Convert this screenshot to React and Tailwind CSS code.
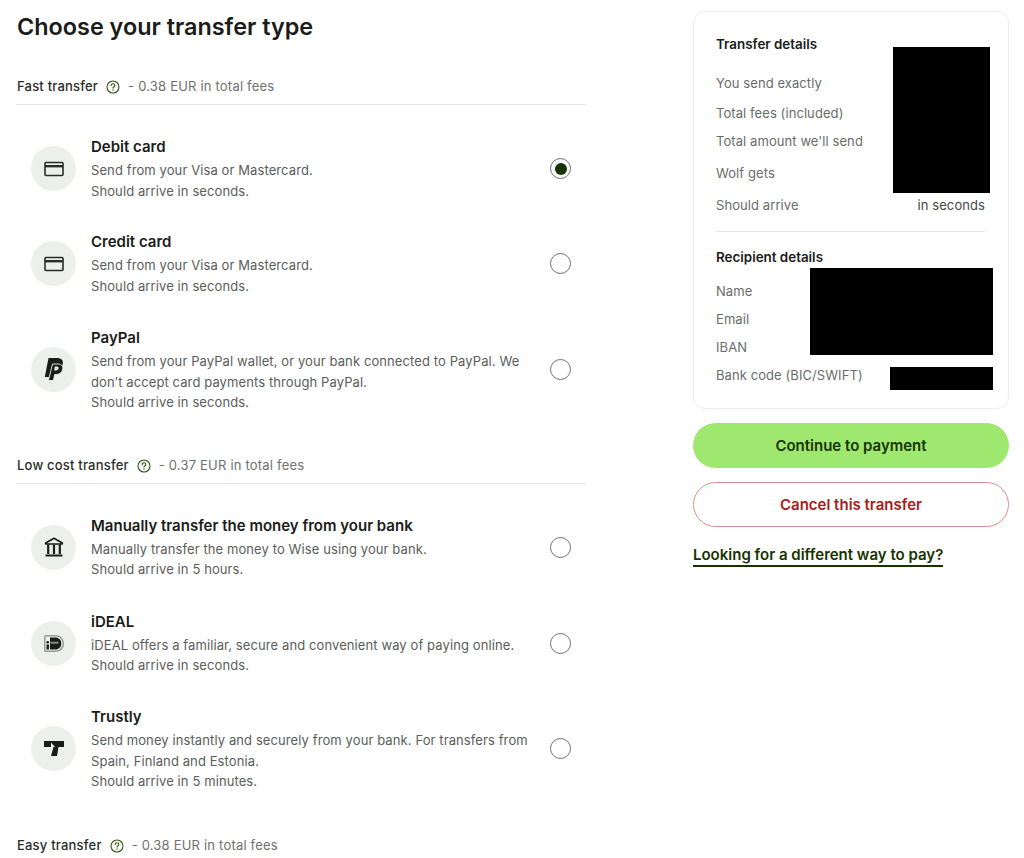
import React from 'react';

const CardIcon = () => (
  <svg width="20" height="16" viewBox="0 0 20 16" fill="none" stroke="#2a2c29" strokeWidth="1.6">
    <rect x="1" y="1.5" width="18" height="13" rx="1" />
    <path d="M1 5.2h18" strokeWidth="2.4" />
  </svg>
);

const PaypalIcon = () => (
  <svg width="20" height="23" viewBox="0 0 20 23">
    <path d="M4.5 0H13c4.300 0 6.500 2.200 5.800 5.800-.7 3.700-3.600 5.700-7.300 5.700H8.700L7.200 19H0.800z" fill="#1a1c19" />
    <path d="M8.500 6h4.200c4.300 0 6.700 1.500 6 5.200-.7 3.400-3.300 5.300-6.500 5.300h-1.500L9.400 22.500H4.400z" fill="#1a1c19" stroke="#edefec" strokeWidth="0.9" />
    <path d="M10.800 8.600l-.6 3.800h1.600c1.500 0 2.500-.8 2.800-2 .2-1.200-.7-1.800-2.200-1.800z" fill="#edefec" />
  </svg>
);

const BankIcon = () => (
  <svg width="20" height="20" viewBox="0 0 20 20" fill="none" stroke="#1a1c19">
    <path d="M10 1.200 18.300 6v1H1.700V6z" strokeWidth="1.600" strokeLinejoin="round" />
    <path d="M4.200 7.500v9.500M10 7.500v9.500M15.800 7.500v9.500" strokeWidth="2.200" />
    <path d="M1.500 18.500h17" strokeWidth="2" />
  </svg>
);

const IdealIcon = () => (
  <svg width="20" height="17" viewBox="0 0 20 17">
    <path d="M0 1.500A1.500 1.500 0 0 1 1.500 0H11c5.400 0 9 3.400 9 8.500S16.400 17 11 17H1.500A1.500 1.500 0 0 1 0 15.500z" fill="#9a9c99" />
    <path d="M1.500 1.500H11c4.400 0 7.500 2.800 7.500 7s-3.100 7-7.500 7H1.500z" fill="#edefec" />
    <path d="M6 2.500h5c3.900 0 6.300 2.400 6.300 6S14.900 14.500 11 14.500H6z" fill="#1a1c19" />
    <rect x="2.500" y="9.500" width="2.500" height="5" fill="#1a1c19" />
    <circle cx="3.700" cy="7.300" r="1.300" fill="#1a1c19" />
    <rect x="6.500" y="6.700" width="8" height="2" fill="#8b8d8a" />
  </svg>
);

const TrustlyIcon = () => (
  <svg width="20" height="15" viewBox="0 0 20 15">
    <path d="M0 0h20v6h-5.500L13 15H7l2.500-9H0z" fill="#1a1c19" />
    <path d="M7 1.500 11 6H7z" fill="#edefec" />
  </svg>
);

const HelpIcon = () => (
  <svg width="14" height="14" viewBox="0 0 14 14" fill="none" stroke="#2f5711" strokeWidth="1.100">
    <circle cx="7" cy="7" r="6" />
    <path d="M5.200 5.500c0-1 .8-1.700 1.800-1.700s1.800.7 1.800 1.600c0 1.300-1.800 1.400-1.800 2.700" strokeLinecap="round" />
    <circle cx="7" cy="10" r=".7" fill="#2f5711" stroke="none" />
  </svg>
);

const Option = ({ icon, title, lines, selected, className }) => (
  <div className={`flex items-center pl-[15px] pr-[15px] ${className}`}>
    <div className="w-[45px] h-[45px] rounded-full bg-[#edefec] flex items-center justify-center shrink-0">
      {icon}
    </div>
    <div className="ml-[15px] flex-1">
      <div className="text-[15px] leading-[22px] font-semibold text-[#1a1c19]">{title}</div>
      <div className="mt-[2px] text-[13px] leading-[20.5px] tracking-[0.1px] text-[#5b5d5a]">
        {lines.map((l) => <div key={l}>{l}</div>)}
      </div>
    </div>
    <div className="ml-[20px] w-[21px] h-[21px] rounded-full border border-[#6f716e] flex items-center justify-center shrink-0">
      {selected && <div className="w-[12px] h-[12px] rounded-full bg-[#163300]" />}
    </div>
  </div>
);

const SectionHead = ({ name, fee, className }) => (
  <div className={`flex items-center h-[26px] border-b border-[#e8e9e7] box-content pb-[4px] ${className}`}>
    <span className="ml-[1px] text-[13px] font-medium tracking-[0.2px] text-[#2a2c29]">{name}</span>
    <span className="ml-[8px] mr-[8px] flex"><HelpIcon /></span>
    <span className="text-[13px] tracking-[0.2px] text-[#6f716e]">- {fee} EUR in total fees</span>
  </div>
);

const DetailRow = ({ label, value, className }) => (
  <div className={`flex justify-between text-[13px] leading-[20px] tracking-[0.08px] ${className}`}>
    <span className="text-[#6a6c69]">{label}</span>
    {value && <span className="text-[#454745]">{value}</span>}
  </div>
);

export default function App() {
  return (
    <div className="h-[858px] overflow-hidden bg-white flex font-['Inter',sans-serif]">
      <div className="w-[570px] ml-[16px] shrink-0">
        <h1 className="mt-[12px] ml-[1px] text-[23.4px] leading-[30px] font-semibold text-[#1a1c19]">Choose your transfer type</h1>

        <SectionHead name="Fast transfer" fee="0.38" className="mt-[32px]" />
        <Option className="mt-[31px]" selected icon={<CardIcon />} title="Debit card"
          lines={['Send from your Visa or Mastercard.', 'Should arrive in seconds.']} />
        <Option className="mt-[30px]" icon={<CardIcon />} title="Credit card"
          lines={['Send from your Visa or Mastercard.', 'Should arrive in seconds.']} />
        <Option className="mt-[31px]" icon={<PaypalIcon />} title="PayPal"
          lines={['Send from your PayPal wallet, or your bank connected to PayPal. We', 'don’t accept card payments through PayPal.', 'Should arrive in seconds.']} />

        <SectionHead name="Low cost transfer" fee="0.37" className="mt-[40.5px]" />
        <Option className="mt-[30.5px]" icon={<BankIcon />} title="Manually transfer the money from your bank"
          lines={['Manually transfer the money to Wise using your bank.', 'Should arrive in 5 hours.']} />
        <Option className="mt-[31px]" icon={<IdealIcon />} title="iDEAL"
          lines={['iDEAL offers a familiar, secure and convenient way of paying online.', 'Should arrive in seconds.']} />
        <Option className="mt-[30.5px]" icon={<TrustlyIcon />} title="Trustly"
          lines={['Send money instantly and securely from your bank. For transfers from', 'Spain, Finland and Estonia.', 'Should arrive in 5 minutes.']} />

        <SectionHead name="Easy transfer" fee="0.38" className="mt-[41px]" />
      </div>

      <div className="w-[316px] ml-[107px] shrink-0 pt-[11px]">
        <div className="relative h-[398px] rounded-[12px] border border-[#eceeeb] pl-[22px] pr-[23px] pt-[22px]">
          <div className="text-[13.4px] leading-[20px] font-semibold text-[#1a1c19]">Transfer details</div>
          <DetailRow className="mt-[19px]" label="You send exactly" />
          <DetailRow className="mt-[10px]" label="Total fees (included)" />
          <DetailRow className="mt-[8px]" label="Total amount we'll send" />
          <DetailRow className="mt-[12px]" label="Wolf gets" />
          <DetailRow className="mt-[12px]" label="Should arrive" value="in seconds" />
          <div className="mt-[16px] border-t border-[#e8e9e7]" />
          <div className="mt-[15px] text-[13.4px] leading-[20px] font-semibold text-[#1a1c19]">Recipient details</div>
          <DetailRow className="mt-[14px]" label="Name" />
          <DetailRow className="mt-[8px]" label="Email" />
          <DetailRow className="mt-[8px]" label="IBAN" />
          <DetailRow className="mt-[8px]" label="Bank code (BIC/SWIFT)" />
          {/* redacted values */}
          <div className="absolute left-[199px] top-[35px] w-[97px] h-[146px] bg-black" />
          <div className="absolute left-[116px] top-[256px] w-[183px] h-[87px] bg-black" />
          <div className="absolute left-[196px] top-[355px] w-[103px] h-[23px] bg-black" />
        </div>
        <button className="mt-[14px] w-full h-[45px] pt-[2px] rounded-full bg-[#9fe870] text-[15px] font-semibold text-[#163300]">Continue to payment</button>
        <button className="mt-[14px] w-full h-[45px] pt-[2px] rounded-full border border-[#d98f8c] text-[15px] font-semibold text-[#a8201a]">Cancel this transfer</button>
        <a className="block w-fit mt-[18px] text-[15px] leading-[20px] font-semibold text-[#163300] border-b-2 border-[#163300]">Looking for a different way to pay?</a>
      </div>
    </div>
  );
}
